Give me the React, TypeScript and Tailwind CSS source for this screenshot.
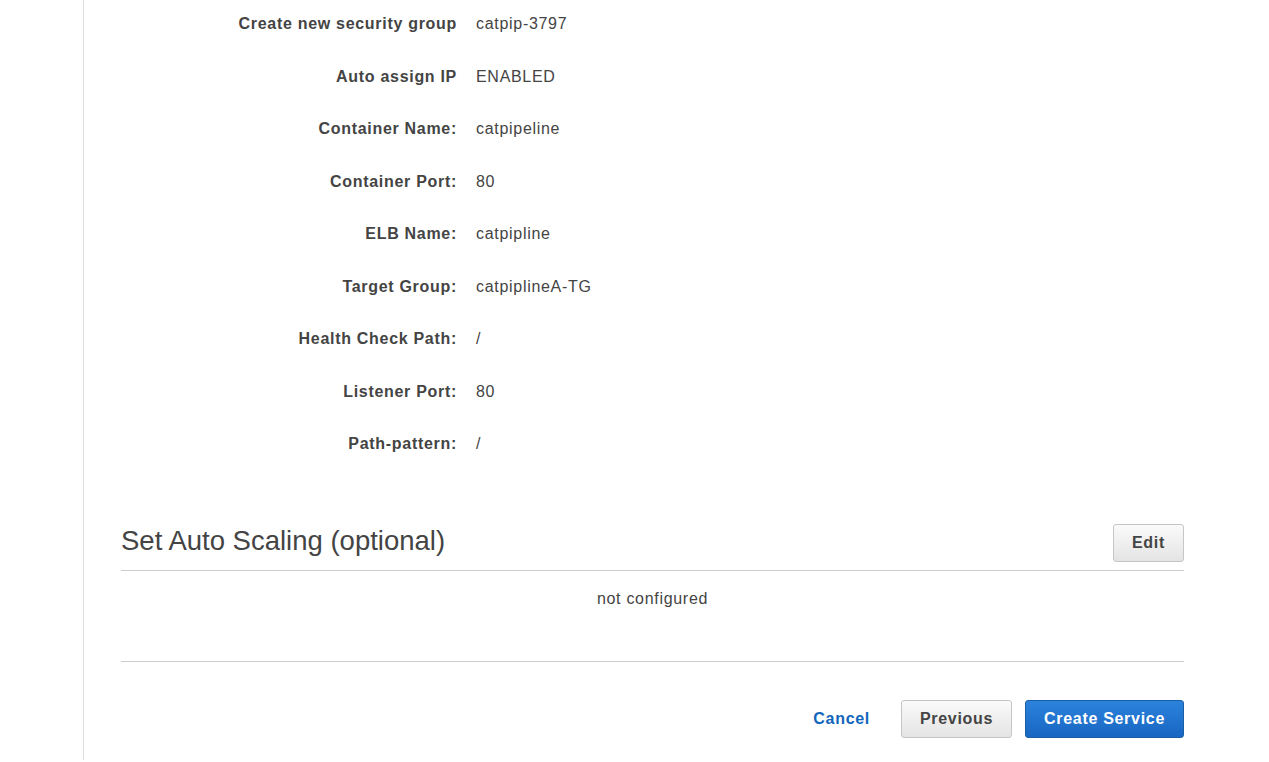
const rows: [string, string][] = [
  ["Create new security group", "catpip-3797"],
  ["Auto assign IP", "ENABLED"],
  ["Container Name:", "catpipeline"],
  ["Container Port:", "80"],
  ["ELB Name:", "catpipline"],
  ["Target Group:", "catpiplineA-TG"],
  ["Health Check Path:", "/"],
  ["Listener Port:", "80"],
  ["Path-pattern:", "/"],
];

export default function App() {
  return (
    <div className="h-[762px] overflow-hidden bg-white text-[#444] font-['Liberation_Sans',Arial,sans-serif]">
      <div className="ml-[83px] h-full border-l border-[#dddddd] pl-[37px] pr-[85px]">
        {/* review rows */}
        <div className="-mt-[2px]">
          {rows.map(([label, value]) => (
            <div key={label} className="flex h-[52.5px] items-center text-[16px] tracking-[0.7px]">
              <div className="w-[336px] text-right font-bold">{label}</div>
              <div className="pl-[19px]">{value}</div>
            </div>
          ))}
        </div>

        {/* auto scaling */}
        <div className="mt-[53px] flex items-center justify-between border-b border-[#cccccc] pb-[8px]">
          <h2 className="mb-[4px] text-[27.5px] leading-none">Set Auto Scaling (optional)</h2>
          <button className="h-[38px] w-[71px] rounded-[3px] border border-[#c6c6c6] bg-gradient-to-b from-[#fafafa] to-[#e4e4e4] text-[16px] font-bold tracking-[0.7px] text-[#444]">
            Edit
          </button>
        </div>
        <div className="border-b border-[#cccccc] pt-[19px] pb-[53px] text-center text-[16px] leading-[18px] tracking-[0.7px]">
          not configured
        </div>

        {/* footer actions */}
        <div className="mt-[38px] flex items-center justify-end text-[16px] font-bold tracking-[0.7px]">
          <a className="mr-[31px] text-[#1166bb]">Cancel</a>
          <button className="mr-[13px] h-[38px] w-[111px] rounded-[3px] border border-[#c6c6c6] bg-gradient-to-b from-[#fafafa] to-[#e4e4e4] text-[#444]">
            Previous
          </button>
          <button className="h-[38px] w-[159px] rounded-[3px] border border-[#1a5ea8] bg-gradient-to-b from-[#2c83dc] to-[#1766c2] text-white">
            Create Service
          </button>
        </div>
      </div>
    </div>
  );
}
